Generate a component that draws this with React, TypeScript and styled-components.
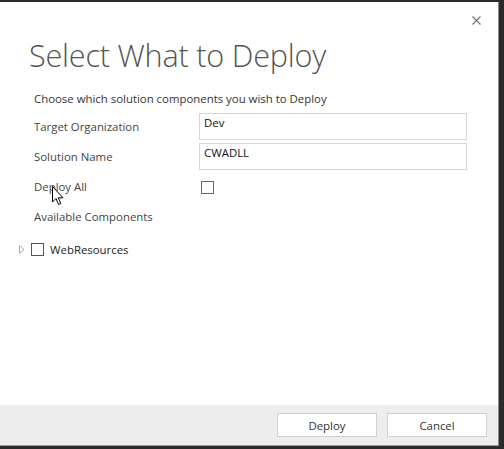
import React from 'react'
import styled, { createGlobalStyle } from 'styled-components'

const Global = createGlobalStyle`
  html, body {
    margin: 0;
    padding: 0;
    background: #2b2b2b;
    font-family: "Open Sans", "Noto Sans", sans-serif;
  }
  body {
    padding-top: 2px;
  }
`

const Dialog = styled.div`
  position: relative;
  width: 498px;
  height: 443px;
  background: #fff;
  border-right: 1px solid #8a8a8a;
  border-bottom: 1px solid #9a9a9a;
  display: flex;
  flex-direction: column;
`

const Close = styled.button`
  position: absolute;
  top: 11px;
  right: 15px;
  width: 14px;
  height: 14px;
  padding: 0;
  border: 0;
  background: none;
  display: flex;
  align-items: center;
  justify-content: center;
`

const Body = styled.div`
  flex: 1;
  padding: 33px 0 0 0;
`

const Title = styled.h1`
  margin: 0 0 0 29px;
  font-weight: 300;
  font-size: 30.6px;
  line-height: 40px;
  color: #555;
  letter-spacing: -0.2px;
`

const Form = styled.div`
  margin: 16px 0 0 34px;
  width: 433px;
`

const Intro = styled.div`
  font-size: 11.4px;
  line-height: 16px;
  color: #333;
  margin-bottom: 6px;
`

const Row = styled.div`
  display: grid;
  grid-template-columns: 165px 1fr;
  align-items: start;
  height: 30px;
`

const Label = styled.div`
  font-size: 11.4px;
  color: #444;
  padding-top: 6px;
  line-height: 16px;
`

const TextBox = styled.div`
  border: 1px solid #d6d6d6;
  padding: 1px 4px;
  box-sizing: border-box;
  height: 27px;
  font-size: 11.4px;
  line-height: 16px;
  color: #111;
`

const Check = styled.span<{ $dark?: boolean }>`
  display: inline-block;
  width: 13px;
  height: 13px;
  box-sizing: border-box;
  border: 1px solid ${p => (p.$dark ? '#555' : '#666')};
  background: #fff;
`

const CheckCell = styled.div`
  padding: 4px 0 0 2px;
`

const Tree = styled.div`
  display: flex;
  align-items: center;
  margin: 8px 0 0 19px;
  height: 16px;
`

const Twisty = styled.span`
  display: flex;
  width: 12px;
`

const NodeLabel = styled.span`
  margin-left: 6px;
  font-size: 11.4px;
  color: #222;
`

const Footer = styled.div`
  height: 40px;
  background: #ededed;
  display: flex;
  align-items: center;
  justify-content: flex-end;
  gap: 10px;
  padding-right: 11px;
`

const Button = styled.button`
  width: 100px;
  height: 24px;
  background: #fff;
  border: 1px solid #d0d0d0;
  font-family: "Open Sans", "Noto Sans", sans-serif;
  font-size: 11.4px;
  color: #333;
  padding: 0;
`

const Cursor = styled.svg`
  position: absolute;
  left: 52px;
  top: 184px;
`

export default function App() {
  return (
    <>
      <Global />
      <Dialog>
        <Close aria-label="Close">
          <svg width="9" height="9" viewBox="0 0 9 9">
            <path d="M0.5 0.5 L8.5 8.5 M8.5 0.5 L0.5 8.5" stroke="#777" strokeWidth="1.2" />
          </svg>
        </Close>
        <Body>
          <Title>Select What to Deploy</Title>
          <Form>
            <Intro>Choose which solution components you wish to Deploy</Intro>
            <Row>
              <Label>Target Organization</Label>
              <TextBox>Dev</TextBox>
            </Row>
            <Row>
              <Label>Solution Name</Label>
              <TextBox>CWADLL</TextBox>
            </Row>
            <Row>
              <Label>Deploy All</Label>
              <CheckCell>
                <Check />
              </CheckCell>
            </Row>
            <Row>
              <Label>Available Components</Label>
            </Row>
          </Form>
          <Tree>
            <Twisty>
              <svg width="6" height="9" viewBox="0 0 6 9">
                <path d="M0.5 0.5 L5 4.5 L0.5 8.5 Z" fill="none" stroke="#aaa" strokeWidth="1" />
              </svg>
            </Twisty>
            <Check $dark />
            <NodeLabel>WebResources</NodeLabel>
          </Tree>
        </Body>
        <Footer>
          <Button>Deploy</Button>
          <Button>Cancel</Button>
        </Footer>
        <Cursor width="13" height="21" viewBox="0 0 13 21">
          <path
            d="M0.5 0.5 L0.5 16 L4 12.5 L6.5 18.5 L8.8 17.5 L6.3 11.8 L11 11.8 Z"
            fill="#fff"
            stroke="#000"
            strokeWidth="1"
            strokeLinejoin="round"
          />
        </Cursor>
      </Dialog>
    </>
  )
}
